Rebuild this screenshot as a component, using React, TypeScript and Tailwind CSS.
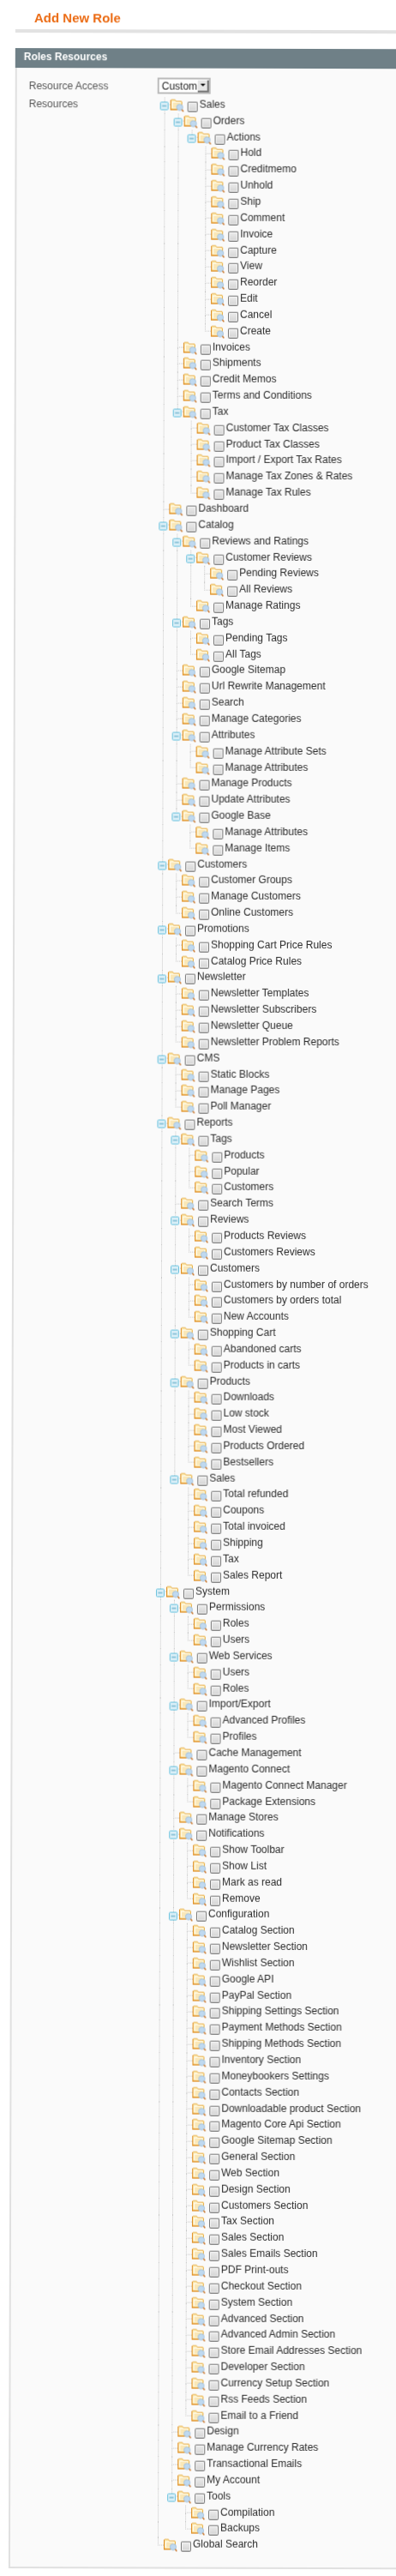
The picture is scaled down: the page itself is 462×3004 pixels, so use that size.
type Node = { label: string; children?: Node[] };

const leaves = (...labels: string[]): Node[] => labels.map((label) => ({ label }));

const TREE: Node[] = [
  {
    label: 'Sales',
    children: [
      {
        label: 'Orders',
        children: [
          {
            label: 'Actions',
            children: leaves('Hold', 'Creditmemo', 'Unhold', 'Ship', 'Comment', 'Invoice', 'Capture', 'View', 'Reorder', 'Edit', 'Cancel', 'Create'),
          },
        ],
      },
      ...leaves('Invoices', 'Shipments', 'Credit Memos', 'Terms and Conditions'),
      {
        label: 'Tax',
        children: leaves('Customer Tax Classes', 'Product Tax Classes', 'Import / Export Tax Rates', 'Manage Tax Zones & Rates', 'Manage Tax Rules'),
      },
    ],
  },
  { label: 'Dashboard' },
  {
    label: 'Catalog',
    children: [
      {
        label: 'Reviews and Ratings',
        children: [
          { label: 'Customer Reviews', children: leaves('Pending Reviews', 'All Reviews') },
          { label: 'Manage Ratings' },
        ],
      },
      { label: 'Tags', children: leaves('Pending Tags', 'All Tags') },
      ...leaves('Google Sitemap', 'Url Rewrite Management', 'Search', 'Manage Categories'),
      { label: 'Attributes', children: leaves('Manage Attribute Sets', 'Manage Attributes') },
      ...leaves('Manage Products', 'Update Attributes'),
      { label: 'Google Base', children: leaves('Manage Attributes', 'Manage Items') },
    ],
  },
  { label: 'Customers', children: leaves('Customer Groups', 'Manage Customers', 'Online Customers') },
  { label: 'Promotions', children: leaves('Shopping Cart Price Rules', 'Catalog Price Rules') },
  { label: 'Newsletter', children: leaves('Newsletter Templates', 'Newsletter Subscribers', 'Newsletter Queue', 'Newsletter Problem Reports') },
  { label: 'CMS', children: leaves('Static Blocks', 'Manage Pages', 'Poll Manager') },
  {
    label: 'Reports',
    children: [
      { label: 'Tags', children: leaves('Products', 'Popular', 'Customers') },
      { label: 'Search Terms' },
      { label: 'Reviews', children: leaves('Products Reviews', 'Customers Reviews') },
      { label: 'Customers', children: leaves('Customers by number of orders', 'Customers by orders total', 'New Accounts') },
      { label: 'Shopping Cart', children: leaves('Abandoned carts', 'Products in carts') },
      { label: 'Products', children: leaves('Downloads', 'Low stock', 'Most Viewed', 'Products Ordered', 'Bestsellers') },
      { label: 'Sales', children: leaves('Total refunded', 'Coupons', 'Total invoiced', 'Shipping', 'Tax', 'Sales Report') },
    ],
  },
  {
    label: 'System',
    children: [
      { label: 'Permissions', children: leaves('Roles', 'Users') },
      { label: 'Web Services', children: leaves('Users', 'Roles') },
      { label: 'Import/Export', children: leaves('Advanced Profiles', 'Profiles') },
      { label: 'Cache Management' },
      { label: 'Magento Connect', children: leaves('Magento Connect Manager', 'Package Extensions') },
      { label: 'Manage Stores' },
      { label: 'Notifications', children: leaves('Show Toolbar', 'Show List', 'Mark as read', 'Remove') },
      {
        label: 'Configuration',
        children: leaves(
          'Catalog Section', 'Newsletter Section', 'Wishlist Section', 'Google API', 'PayPal Section',
          'Shipping Settings Section', 'Payment Methods Section', 'Shipping Methods Section', 'Inventory Section',
          'Moneybookers Settings', 'Contacts Section', 'Downloadable product Section', 'Magento Core Api Section',
          'Google Sitemap Section', 'General Section', 'Web Section', 'Design Section', 'Customers Section',
          'Tax Section', 'Sales Section', 'Sales Emails Section', 'PDF Print-outs', 'Checkout Section',
          'System Section', 'Advanced Section', 'Advanced Admin Section', 'Store Email Addresses Section',
          'Developer Section', 'Currency Setup Section', 'Rss Feeds Section', 'Email to a Friend',
        ),
      },
      ...leaves('Design', 'Manage Currency Rates', 'Transactional Emails', 'My Account'),
      { label: 'Tools', children: leaves('Compilation', 'Backups') },
    ],
  },
  { label: 'Global Search' },
];

type Row = { label: string; open: boolean; last: boolean; guides: boolean[] };

// Flatten the tree; guides[i] says whether the ancestor at level i still has siblings below.
function flatten(nodes: Node[], guides: boolean[] = []): Row[] {
  return nodes.flatMap((node, i) => {
    const last = i === nodes.length - 1;
    const row: Row = { label: node.label, open: !!node.children, last, guides };
    return [row, ...(node.children ? flatten(node.children, [...guides, !last]) : [])];
  });
}

const ROWS = flatten(TREE);

function FolderIcon() {
  return (
    <svg width="16" height="15" viewBox="0 0 16 15" className="shrink-0">
      <path d="M0.5 12 L0.5 1.5 L1.2 0.8 L5.5 0.8 L6.5 2.5 L13 2.5 L13.5 3.2 L13.5 12 Z" fill="#fdeeb8" stroke="#e8ae48" />
      <rect x="2" y="3" width="9.5" height="7.5" fill="#fffdf2" />
      <path d="M3 5 H11 M3 7 H10 M3 9 H8" stroke="#f6d27c" />
      <path d="M0.5 1 V12.3 H9" stroke="#e09028" fill="none" strokeWidth="1.2" />
      <circle cx="11" cy="9.6" r="3.6" fill="#bfd9f0" stroke="#a8c3da" />
      <path d="M13.4 12.2 L15.4 14.4" stroke="#c7752a" strokeWidth="1.5" />
    </svg>
  );
}

function MinusBox() {
  return (
    <svg width="10" height="10" viewBox="0 0 10 10">
      <rect x="0.5" y="0.5" width="9" height="9" rx="1.2" fill="#d8eef7" stroke="#6cc3de" />
      <path d="M2.5 5 H7.5" stroke="#4b9fbe" />
    </svg>
  );
}

function CheckBox() {
  return (
    <div className="mt-[3px] ml-[4px] h-[12px] w-[12px] shrink-0 rounded-[2px] border border-[#777] border-b-[#555] bg-gradient-to-b from-[#ececec] to-[#d4d4d4] shadow-[inset_0_0_0_1px_#f6f6f6]" />
  );
}

function TreeRow({ row }: { row: Row }) {
  return (
    <div className="flex h-[18.85px] items-center whitespace-nowrap">
      {row.guides.map((on, i) => (
        <div key={i} className={`h-full w-4 shrink-0 ${on ? 'border-l border-dotted border-[#c8c8c8]' : ''}`} />
      ))}
      <div className="relative flex h-full w-[7px] shrink-0 flex-col">
        <div className="h-1/2 border-b border-l border-dotted border-[#c8c8c8]" />
        <div className={`h-1/2 ${row.last ? '' : 'border-l border-dotted border-[#c8c8c8]'}`} />
        {row.open && (
          <div className="absolute top-[5px] -left-[5px] flex">
            <MinusBox />
          </div>
        )}
      </div>
      <FolderIcon />
      <CheckBox />
      <span className="-mt-[3px] ml-[2px] text-[12px] leading-none text-[#2b2b2b]">{row.label}</span>
    </div>
  );
}

export default function App() {
  return (
    <div className="h-[3004px] w-[462px] overflow-hidden bg-white">
      {/* the screenshot sits very slightly rotated and soft, so the whole page follows it */}
      <div className="h-[3004px] w-[480px] origin-top-left rotate-[0.155deg] bg-white pl-[18px] font-['Liberation_Sans',Arial,sans-serif] blur-[0.3px]">
        <div className="pt-[12px]">
          <h3 className="pl-[22px] text-[15px] leading-[17px] font-bold text-[#eb6a12]">Add New Role</h3>
          <div className="mt-[5px] h-[4px] bg-[#e2e2e2]" />
        </div>
        <section className="mt-[18px]">
          <div className="h-[23px] bg-[#6f8087] pl-[10px] text-[12px] leading-[21px] font-bold text-white">Roles Resources</div>
          <div className="h-[2916px] border-b-2 border-l-2 border-[#e0e0e0] bg-[#fafafa] pt-[11px]">
            <div className="flex items-center">
              <label className="w-[164px] pl-[14px] text-[12px] text-[#555]">Resource Access</label>
              <div className="flex h-[19px] w-[62px] items-center border-2 border-[#bbb] bg-white pl-[3px] text-[12px] text-[#222]">
                Custom
                <div className="ml-[1px] flex h-[14px] w-[13px] items-center justify-center border-r-2 border-b-2 border-[#777] bg-[#e6e6e6]">
                  <div className="h-0 w-0 border-x-[3px] border-t-[3px] border-x-transparent border-t-black" />
                </div>
              </div>
            </div>
            <div className="mt-[4px] flex">
              <label className="w-[172px] shrink-0 pt-[1px] pl-[14px] text-[12px] leading-[14px] text-[#555]">Resources</label>
              <div className="min-w-0 flex-1">
                {ROWS.map((row, i) => (
                  <TreeRow key={i} row={row} />
                ))}
              </div>
            </div>
          </div>
        </section>
      </div>
    </div>
  );
}
